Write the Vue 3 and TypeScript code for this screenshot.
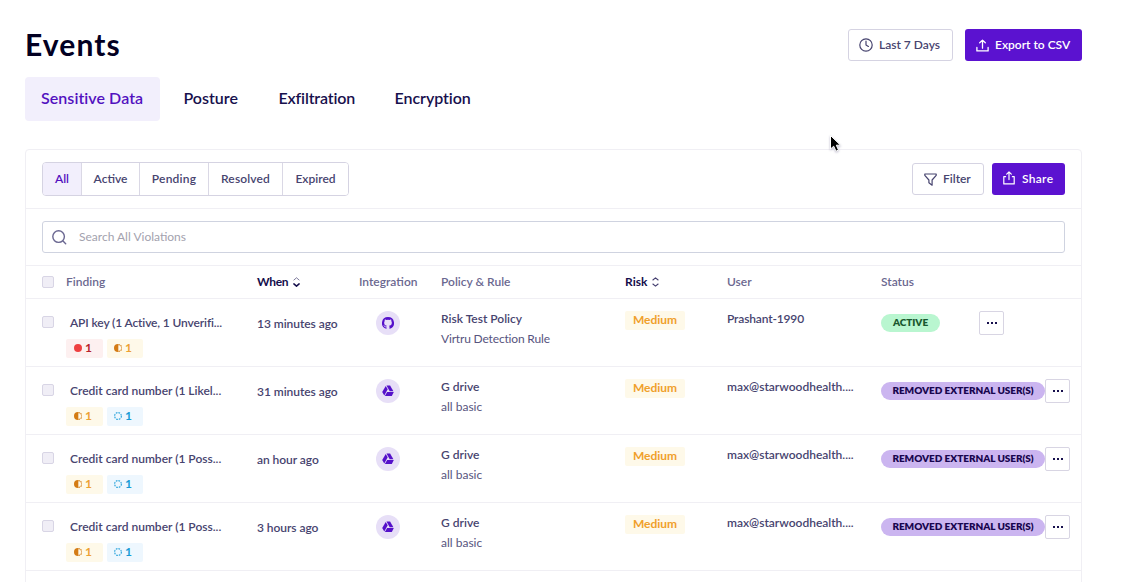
<script setup lang="ts">
type Level = 'active' | 'likely' | 'possible'

interface EventRow {
  finding: string
  tight?: boolean
  levels: Level[]
  when: string
  integration: 'github' | 'drive'
  policy: string
  rule: string
  user: string
  status: 'active' | 'removed'
}

const tabs = ['Sensitive Data', 'Posture', 'Exfiltration', 'Encryption']
const filters = ['All', 'Active', 'Pending', 'Resolved', 'Expired']
const statusLabel = { active: 'ACTIVE', removed: 'REMOVED EXTERNAL USER(S)' }

const drive = {
  levels: ['likely', 'possible'] as Level[],
  integration: 'drive' as const,
  policy: 'G drive',
  rule: 'all basic',
  user: 'max@starwoodhealth....',
  status: 'removed' as const,
}

const rows: EventRow[] = [
  {
    finding: 'API key (1 Active, 1 Unverifi...',
    tight: true,
    levels: ['active', 'likely'],
    when: '13 minutes ago',
    integration: 'github',
    policy: 'Risk Test Policy',
    rule: 'Virtru Detection Rule',
    user: 'Prashant-1990',
    status: 'active',
  },
  { ...drive, finding: 'Credit card number (1 Likel...', when: '31 minutes ago' },
  { ...drive, finding: 'Credit card number (1 Poss...', when: 'an hour ago' },
  { ...drive, finding: 'Credit card number (1 Poss...', when: '3 hours ago' },
]
</script>

<template>
  <main class="page">
    <header class="head">
      <h1>Events</h1>
      <div class="actions">
        <button class="btn outline range">
          <svg width="14" height="14" viewBox="0 0 14 14" fill="none" stroke="currentColor" stroke-width="1.2" stroke-linecap="round" stroke-linejoin="round">
            <circle cx="7" cy="7" r="6.2" /><path d="M7 3.2V7l2.4 1.4" />
          </svg>
          <span>Last 7 Days</span>
        </button>
        <button class="btn solid export">
          <svg width="13" height="13" viewBox="0 0 13 13" fill="none" stroke="currentColor" stroke-width="1.3" stroke-linecap="round" stroke-linejoin="round">
            <path d="M6.5 9.2V1.2M3.7 3.8l2.8-2.7 2.8 2.7M.9 8.5v3.4h11.2V8.5" />
          </svg>
          <span>Export to CSV</span>
        </button>
      </div>
    </header>

    <nav class="tabs">
      <a v-for="(t, i) in tabs" :key="t" class="tab" :class="{ on: i === 0 }">{{ t }}</a>
    </nav>

    <section class="card">
      <div class="toolbar">
        <div class="segments">
          <button v-for="(f, i) in filters" :key="f" class="segment" :class="[{ on: i === 0 }, 'seg-' + f.toLowerCase()]">{{ f }}</button>
        </div>
        <div class="tools">
          <button class="btn outline filter">
            <svg width="13" height="13" viewBox="0 0 13 13" fill="none" stroke="currentColor" stroke-width="1.2" stroke-linejoin="round">
              <path d="M.8 1h11.4v1.3L8.1 7v5.2L4.9 9.8V7L.8 2.3z" />
            </svg>
            <span>Filter</span>
          </button>
          <button class="btn solid share">
            <svg width="12" height="14" viewBox="0 0 12 14" fill="none" stroke="currentColor" stroke-width="1.2" stroke-linecap="round" stroke-linejoin="round">
              <path d="M6 8.6V1M3.7 3.1L6 .9l2.3 2.2M2.6 5.7H.8v7.2h10.4V5.7H9.4" />
            </svg>
            <span>Share</span>
          </button>
        </div>
      </div>

      <div class="search-row">
        <div class="search">
          <svg width="15" height="15" viewBox="0 0 15 15" fill="none" stroke="currentColor" stroke-width="1.4" stroke-linecap="round">
            <circle cx="6.6" cy="6.6" r="5.8" /><path d="M11 11l2.7 2.7" />
          </svg>
          <span>Search All Violations</span>
        </div>
      </div>

      <div class="grid thead">
        <span class="check"></span>
        <span>Finding</span>
        <span class="sort when-head">When
          <svg width="7" height="10" viewBox="0 0 7 10" fill="none" stroke="currentColor" stroke-linecap="round" stroke-linejoin="round">
            <path d="M.9 3L3.5.8 6.1 3" stroke-width=".9" opacity=".6" /><path d="M.9 6.9l2.6 2.2 2.6-2.2" stroke-width="1.5" />
          </svg>
        </span>
        <span>Integration</span>
        <span>Policy &amp; Rule</span>
        <span class="sort">Risk
          <svg width="7" height="10" viewBox="0 0 7 10" fill="none" stroke="currentColor" stroke-width="1.1" stroke-linecap="round" stroke-linejoin="round" opacity=".8">
            <path d="M.9 3L3.5.8 6.1 3M.9 7l2.6 2.2L6.1 7" />
          </svg>
        </span>
        <span>User</span>
        <span>Status</span>
      </div>

      <div v-for="(r, n) in rows" :key="n" class="grid row">
        <span class="check"></span>
        <div class="finding">
          <div class="name" :class="{ tight: r.tight }">{{ r.finding }}</div>
          <div class="chips">
            <span v-for="l in r.levels" :key="l" class="chip" :class="l">
              <svg width="8" height="8" viewBox="0 0 8 8" fill="none" stroke="currentColor">
                <circle v-if="l === 'active'" cx="4" cy="4" r="4" fill="currentColor" stroke="none" />
                <template v-else-if="l === 'likely'">
                  <path d="M4.300 0H4a4 4 0 0 0 0 8h.3z" fill="currentColor" stroke="none" />
                  <path d="M4.400.600a3.400 3.400 0 0 1 0 6.800" stroke-width="1.100" stroke-dasharray="1.500 .7" />
                </template>
                <circle v-else cx="4" cy="4" r="3.400" stroke-width="1.200" stroke-dasharray="1.700 .97" />
              </svg>
              <b>1</b>
            </span>
          </div>
        </div>
        <div class="when">{{ r.when }}</div>
        <div class="integration">
          <span class="disc">
            <svg v-if="r.integration === 'github'" width="12" height="12" viewBox="0 0 16 16" fill="currentColor">
              <path d="M8 0a8 8 0 0 0-2.5 15.6c.4.1.5-.2.5-.4v-1.5c-2 .4-2.6-.5-2.8-1-.1-.2-.5-.9-.8-1.1-.3-.2-.7-.5 0-.5.6 0 1.100.6 1.200.8.7 1.200 1.900.9 2.400.7.1-.5.3-.9.5-1.100-1.800-.2-3.600-.9-3.600-4 0-.9.3-1.600.8-2.100-.1-.2-.4-1 .1-2.100 0 0 .7-.2 2.200.8a7.500 7.500 0 0 1 4 0c1.500-1 2.200-.8 2.200-.8.4 1.100.2 1.900.1 2.100.5.6.8 1.300.8 2.100 0 3.100-1.900 3.700-3.700 4 .3.200.6.7.6 1.500v2.200c0 .2.100.5.5.4A8 8 0 0 0 8 0z" />
            </svg>
            <svg v-else width="12" height="12" viewBox="0 0 12 12" fill="currentColor">
              <path d="M3.700.9L5.700 4.300 2.300 10.500.2 7z" />
              <path d="M4.500.5h3.600l3.300 5.700H7.700z" />
              <path d="M5.100 7.100h6.700l-2 3.900H2.900z" />
            </svg>
          </span>
        </div>
        <div class="policy">
          <div class="strong">{{ r.policy }}</div>
          <div class="rule" :class="{ tight: r.tight }">{{ r.rule }}</div>
        </div>
        <div><span class="risk">Medium</span></div>
        <div class="user" :class="{ tight: r.tight }">{{ r.user }}</div>
        <div class="status">
          <div class="pill-box"><span class="pill" :class="r.status">{{ statusLabel[r.status] }}</span></div>
          <button class="more"><i></i><i></i><i></i></button>
        </div>
      </div>
    </section>

    <svg class="cursor" width="14" height="20" viewBox="0 0 14 20">
      <path d="M1.500 1.500v13.500l3.200-2.800 2.300 5 2.500-1.100-2.200-4.900h4.200z" fill="#000" stroke="#fff" stroke-width="1" />
    </svg>
  </main>
</template>

<style>
body {
  margin: 0;
  background: #fff;
  overflow: hidden;
}
</style>

<style scoped>
.page {
  box-sizing: border-box;
  position: relative;
  height: 582px;
  padding: 29px 64px 0 25px;
  overflow: hidden;
  font: 600 12px/16px Lato, "Liberation Sans", sans-serif;
  color: #47446f;
}
.page * { box-sizing: border-box; }
button { font: inherit; color: inherit; margin: 0; padding: 0; }
svg { flex: none; display: block; }
.head { display: flex; justify-content: space-between; height: 48px; }
h1 { margin: 0; font-size: 30px; line-height: 30px; font-weight: 700; letter-spacing: 1.1px; color: #030022; }
.actions, .tools { display: flex; }
.actions { gap: 12px; }
.tools { gap: 8px; }
.btn { display: flex; align-items: center; height: 32px; border-radius: 3px; white-space: nowrap; }
.outline { background: #fff; border: 1px solid #d5d3e2; }
.solid { background: #5b12d0; border: 0; color: #fff; }
.range { width: 105px; padding-left: 10px; gap: 6px; }
.export { width: 117px; padding-left: 11px; gap: 6px; }
.filter { width: 72px; padding-left: 11px; gap: 6px; }
.share { width: 73px; padding-left: 11px; gap: 7px; letter-spacing: .3px; }
.share svg { position: relative; top: -1px; }
.tabs { display: flex; height: 72px; gap: 6px; }
.tab { height: 44px; padding: 0 16px; font-size: 16px; line-height: 41px; border-radius: 4px; color: #17104d; }
.tab:nth-child(1) { width: 134.5px; background: #f2effc; color: #5211bf; letter-spacing: .06px; }
.tab:nth-child(2) { margin-left: 2px; width: 89px; }
.tab:nth-child(3) { width: 110px; letter-spacing: -.15px; }
.tab:nth-child(4) { letter-spacing: -.05px; }
.card { height: 450px; border: 1px solid #f0eff4; border-radius: 4px 4px 0 0; }
.toolbar { display: flex; justify-content: space-between; padding: 12px 16px 0; height: 59px; border-bottom: 1px solid #f0eff4; }
.tools { padding-top: 1px; }
.segments { display: flex; height: 34px; border: 1px solid #d5d3e2; border-radius: 4px; overflow: hidden; }
.segment { border: 0; border-left: 1px solid #dad8e5; background: #fff; text-align: center; }
.seg-all { width: 38px; border-left: 0; }
.seg-active { width: 58px; }
.seg-pending { width: 69px; letter-spacing: .2px; }
.seg-resolved { width: 74px; letter-spacing: .15px; }
.seg-expired { width: 66px; }
.segment.on { background: #f2effc; color: #5211bf; }
.search-row { height: 57px; padding: 12px 16px 0; border-bottom: 1px solid #f0eff4; }
.search { display: flex; align-items: center; gap: 12px; height: 32px; padding-left: 9px; border: 1px solid #cfd3e0; border-radius: 3px; font-weight: 400; color: #a3a2ae; }
.search svg { color: #6a6791; }
.grid { display: grid; grid-template-columns: 24px 191px 102px 82px 184px 102px 154px 1fr; padding-left: 16px; border-bottom: 1px solid #f0eff4; white-space: nowrap; }
.thead { height: 33px; align-items: center; color: #6b6890; }
.sort { display: flex; align-items: center; gap: 5px; color: #140d4b; font-weight: 700; }
.when-head { letter-spacing: -.3px; }
.check { width: 12px; height: 12px; border: 1px solid #d8d5e5; border-radius: 2px; background: #f0eef6; }
.row { height: 68px; align-items: start; }
.row .check { margin-top: 17px; }
.name { margin-top: 16px; padding-left: 4px; }
.name.tight { letter-spacing: -.13px; }
.chips { display: flex; gap: 4px; margin-top: 8px; }
.chip { display: flex; align-items: center; gap: 3px; width: 37px; height: 19px; padding: 0 0 1px 8px; border-radius: 2px; }
.chip + .chip { width: 36px; padding-left: 7px; }
.chip b { font-weight: 700; line-height: 18px; }
.chip.active { background: #fdf0f0; color: #ee4041; }
.chip.active b { color: #b8222b; }
.chip.likely { background: #fef9e9; color: #d47b14; }
.chip.likely b { color: #eda133; }
.chip.possible { background: #eef7fe; color: #35a8dd; }
.chip.possible b { color: #189bd6; }
.when { margin-top: 17px; letter-spacing: -.05px; }
.integration { padding: 12px 0 0 17px; }
.disc { display: flex; align-items: center; justify-content: center; width: 24px; height: 24px; border-radius: 50%; background: #e7dff7; color: #5511ca; }
.policy { padding-top: 12px; }
.rule { margin-top: 4px; font-weight: 400; color: #57547e; }
.rule.tight { letter-spacing: -.17px; }
.risk { display: block; width: 60px; height: 19px; margin-top: 12px; border-radius: 2px; background: #fef9e9; color: #f0a02b; font-weight: 700; line-height: 18px; text-align: center; }
.user { margin-top: 12px; }
.user.tight { letter-spacing: -.15px; }
.status { display: flex; padding-top: 12px; }
.pill-box { min-width: 98px; padding-top: 3px; }
.pill { display: block; width: 59px; height: 18px; border-radius: 9px; font-size: 10px; line-height: 17px; font-weight: 800; text-align: center; letter-spacing: -.04px; }
.pill.active { background: #b9f6d0; color: #19582f; }
.pill.removed { width: 164px; background: #cbb5f0; color: #18054f; }
.more { display: flex; align-items: center; justify-content: center; gap: 2px; width: 25px; height: 24px; border: 1px solid #d8d5e3; border-radius: 2px; background: #fff; }
.more i { width: 2px; height: 2px; background: #17104d; }
.cursor { position: absolute; left: 829px; top: 134px; filter: drop-shadow(0 1px 1px rgba(40, 30, 90, .3)); }
</style>
